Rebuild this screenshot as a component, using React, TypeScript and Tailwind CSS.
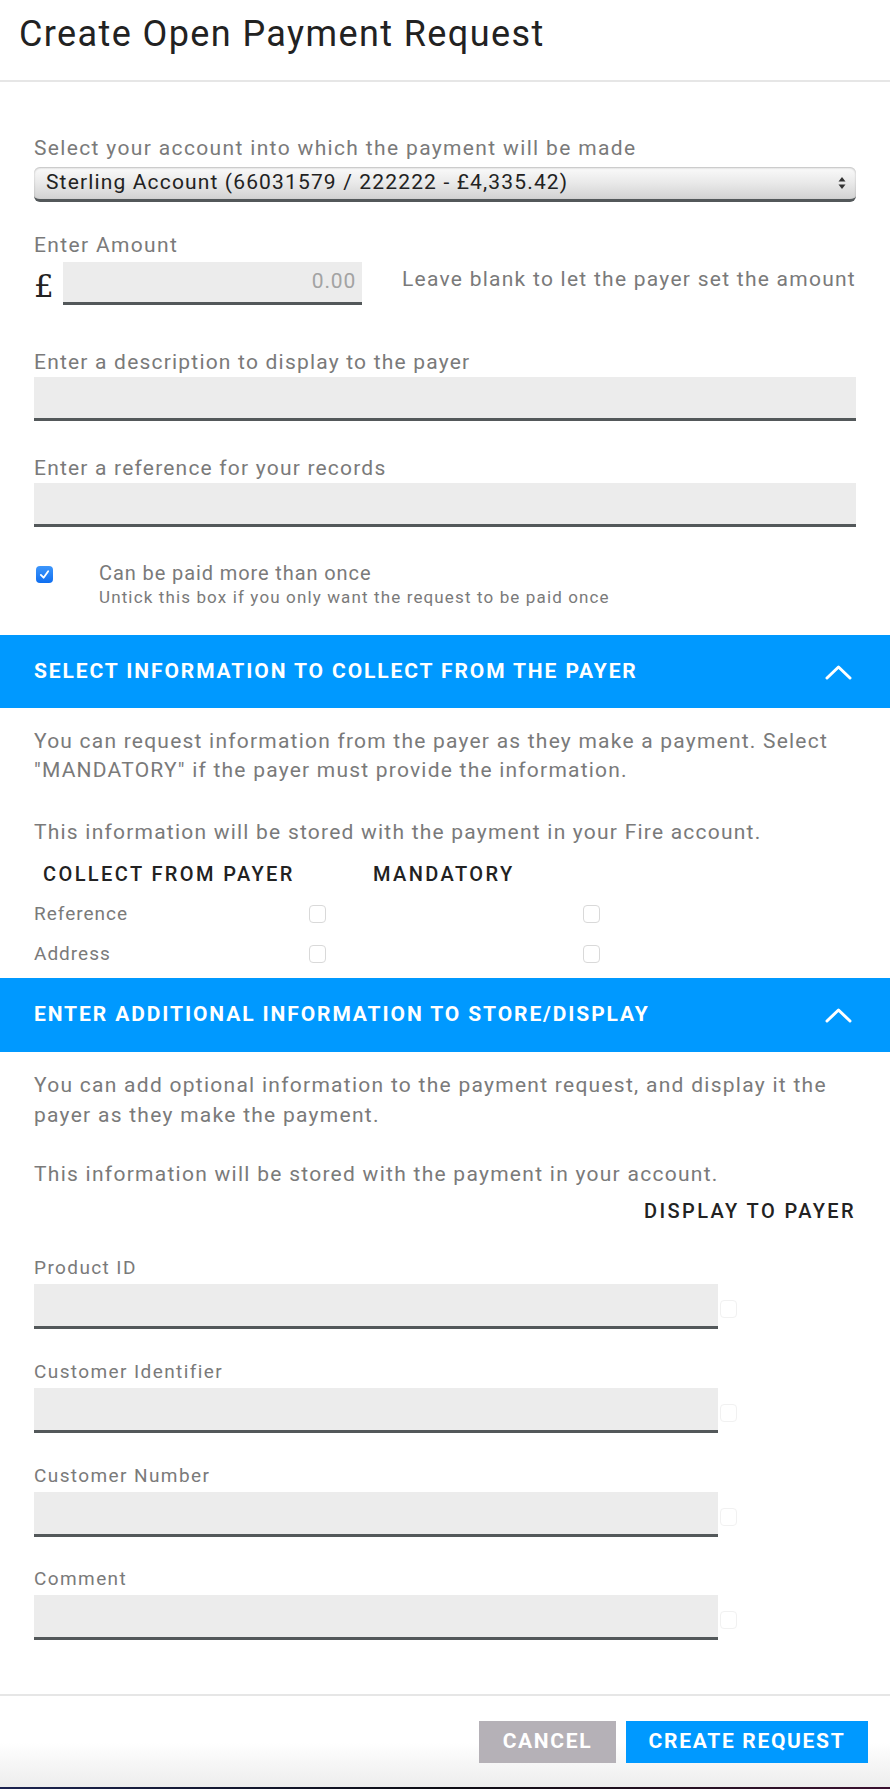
const font = { fontFamily: "Roboto, 'Liberation Sans', sans-serif" };

const Box = ({ faint = false }: { faint?: boolean }) => (
  <div
    className={`h-[18px] w-[17px] rounded-[4px] border bg-white ${faint ? "border-[#f1f1f1]" : "border-[#d9d9d9]"}`}
  />
);

const Field = ({ label, top }: { label: string; top: string }) => (
  <div className={top}>
    <div className="text-[21px] leading-[24px] tracking-[1.2px] text-[#7a7a7a]">{label}</div>
    <div className="mt-[3px] h-[44px] bg-[#ececec] border-b-[3px] border-[#53585a]" />
  </div>
);

const ExtraField = ({ label, top }: { label: string; top: string }) => (
  <div className={top}>
    <div className="text-[19px] leading-[24px] tracking-[1.4px] text-[#7a7a7a]">{label}</div>
    <div className="mt-[4px] flex items-center">
      <div className="h-[45px] w-[684px] bg-[#ececec] border-b-[3px] border-[#53585a]" />
      <div className="ml-[2px] mt-[4px]">
        <Box faint />
      </div>
    </div>
  </div>
);

const SectionBar = ({ title, h }: { title: string; h: string }) => (
  <div className={`${h} bg-[#0099ff] flex items-center justify-between pl-[34px] pr-[38px]`}>
    <span className="text-white text-[21px] font-bold tracking-[0.09em] uppercase">{title}</span>
    <svg width="27" height="16" viewBox="0 0 27 16" fill="none">
      <polyline points="2,14 13.5,3 25,14" stroke="white" strokeWidth="3" strokeLinecap="round" strokeLinejoin="round" />
    </svg>
  </div>
);

export default function App() {
  return (
    <div className="w-[890px] min-h-[1789px] bg-white flex flex-col" style={font}>
      {/* header */}
      <div className="h-[82px] border-b-2 border-[#e6e6e6] pl-[19px] pt-[13px]">
        <h1 className="text-[36px] leading-[42px] tracking-[1.4px] text-[#222] font-normal">Create Open Payment Request</h1>
      </div>

      <div className="px-[34px] pt-[54px]">
        <div className="text-[21px] leading-[24px] tracking-[1.35px] text-[#7a7a7a]">Select your account into which the payment will be made</div>
        <div className="mt-[7px] h-[35px] rounded-[6px] border-b-[3px] border-[#53585a] bg-gradient-to-b from-[#fbfbfb] via-[#e9e9e9] to-[#d2d2d2] shadow-[inset_0_1px_2px_rgba(0,0,0,0.25)] flex items-center justify-between pl-[12px] pr-[10px]">
          <span className="text-[21px] tracking-[1.15px] text-[#222]">Sterling Account (66031579 / 222222 - £4,335.42)</span>
          <svg width="8" height="14" viewBox="0 0 8 14">
            <polygon points="4,1 7.5,5.5 0.5,5.5" fill="#333" />
            <polygon points="4,13 7.5,8.5 0.5,8.5" fill="#333" />
          </svg>
        </div>

        <div className="mt-[31px] text-[21px] leading-[24px] tracking-[1.35px] text-[#7a7a7a]">Enter Amount</div>
        <div className="mt-[5px] flex items-end">
          <span className="w-[29px] text-[31px] leading-[34px] text-[#222] pb-[2px]" style={{ fontFamily: "'DejaVu Serif', serif" }}>£</span>
          <div className="h-[43px] w-[299px] bg-[#ececec] border-b-[3px] border-[#53585a] flex items-center justify-end pr-[6px] text-[21px] tracking-[0.8px] text-[#a3a3a3]">0.00</div>
          <span className="ml-auto mb-[10px] text-[21px] tracking-[1.26px] text-[#7a7a7a]">Leave blank to let the payer set the amount</span>
        </div>

        <Field label="Enter a description to display to the payer" top="mt-[45px]" />
        <Field label="Enter a reference for your records" top="mt-[35px]" />

        <div className="mt-[34px] flex">
          <div className="mt-[5px] w-[17px] h-[17px] rounded-[4px] bg-gradient-to-b from-[#3d96fb] to-[#0d6ef0] flex items-center justify-center ml-[2px]">
            <svg width="11" height="11" viewBox="0 0 12 12" fill="none">
              <polyline points="2,6.5 5,9.5 10,2.5" stroke="white" strokeWidth="2" strokeLinecap="round" strokeLinejoin="round" />
            </svg>
          </div>
          <div className="ml-[46px] text-[#7a7a7a]">
            <div className="text-[20px] leading-[24px] tracking-[0.9px]">Can be paid more than once</div>
            <div className="mt-[2px] text-[17px] leading-[21px] tracking-[1.13px]">Untick this box if you only want the request to be paid once</div>
          </div>
        </div>
      </div>

      <div className="mt-[27px]">
        <SectionBar title="Select information to collect from the payer" h="h-[73px]" />
      </div>

      <div className="px-[34px] text-[21px] tracking-[1.22px] text-[#7a7a7a]">
        <p className="mt-[19px] leading-[29px]">
          <span className="block">You can request information from the payer as they make a payment. Select</span>
          <span className="block">"MANDATORY" if the payer must provide the information.</span>
        </p>
        <p className="mt-[33px] leading-[29px]">This information will be stored with the payment in your Fire account.</p>
        <div className="mt-[15px] flex pl-[9px] text-[20px] leading-[24px] font-medium tracking-[0.12em] text-[#222] uppercase">
          <span className="w-[330px]">Collect from payer</span>
          <span>Mandatory</span>
        </div>
        <div className="mt-[8px]">
          {["Reference", "Address"].map((r) => (
            <div key={r} className="h-[40px] flex items-center text-[19px] tracking-[1px]">
              <span className="w-[275px]">{r}</span>
              <div className="w-[274px]">
                <Box />
              </div>
              <Box />
            </div>
          ))}
        </div>
      </div>

      <div className="mt-[4px]">
        <SectionBar title="Enter additional information to store/display" h="h-[74px]" />
      </div>

      <div className="px-[34px] text-[21px] tracking-[1.27px] text-[#7a7a7a]">
        <p className="mt-[18px] leading-[30px]">
          <span className="block">You can add optional information to the payment request, and display it the</span>
          <span className="block">payer as they make the payment.</span>
        </p>
        <p className="mt-[30px] leading-[29px]">This information will be stored with the payment in your account.</p>
        <div className="mt-[10px] text-right text-[20px] leading-[24px] font-medium tracking-[0.12em] text-[#222] uppercase">
          Display to payer
        </div>
        <ExtraField label="Product ID" top="mt-[33px]" />
        <ExtraField label="Customer Identifier" top="mt-[31px]" />
        <ExtraField label="Customer Number" top="mt-[31px]" />
        <ExtraField label="Comment" top="mt-[30px]" />
      </div>

      <div className="mt-[54px] flex-1 flex flex-col border-t-2 border-[#e6e6e6] bg-gradient-to-b from-white via-white to-[#ececec]">
        <div className="flex justify-end gap-[10px] pr-[22px] pt-[25px] pb-[24px]">
          <button className="h-[42px] w-[137px] bg-[#b5b1b7] text-white text-[21px] font-bold tracking-[0.08em] uppercase">Cancel</button>
          <button className="h-[42px] w-[242px] bg-[#0099ff] text-white text-[21px] font-bold tracking-[0.08em] uppercase">Create request</button>
        </div>
        <div className="mt-auto h-[2px] bg-gradient-to-r from-[#1b2350] via-[#0d0d14] to-[#3a1030]" />
      </div>
    </div>
  );
}
